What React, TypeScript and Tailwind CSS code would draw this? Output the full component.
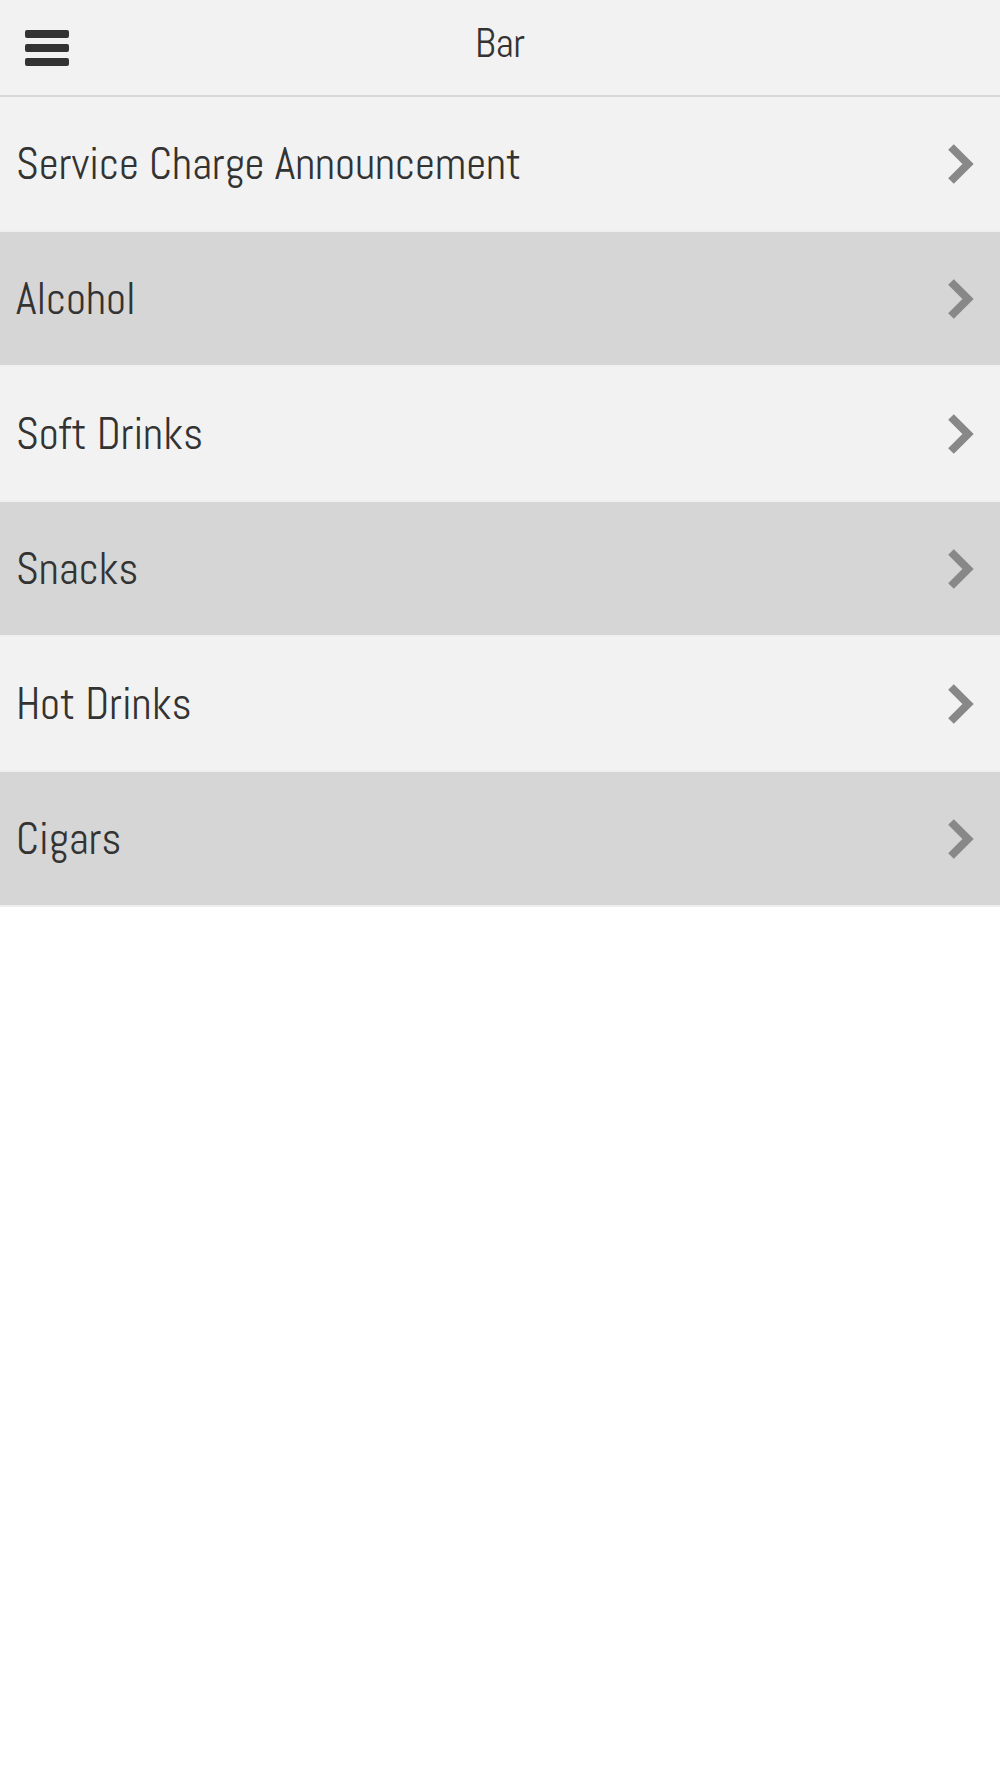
import React from "react";

const items = [
  "Service Charge Announcement",
  "Alcohol",
  "Soft Drinks",
  "Snacks",
  "Hot Drinks",
  "Cigars",
];

function Chevron() {
  return (
    <svg width="28" height="42" viewBox="0 0 28 42" className="shrink-0">
      <path d="M5 4 L22 21 L5 38" fill="none" stroke="#888888" strokeWidth="8" strokeLinejoin="miter" />
    </svg>
  );
}

export default function App() {
  return (
    <div className="min-h-[1778px] bg-white" style={{ fontFamily: 'Abel, "Roboto Condensed", "Liberation Sans", sans-serif' }}>
      <header className="h-[97px] bg-[#f2f2f2] border-b-2 border-[#d9d9d9] flex items-center relative">
        <div className="pl-[25px] flex flex-col gap-[6px]">
          <span className="block w-[44px] h-[8px] rounded-[2px] bg-[#333333]" />
          <span className="block w-[44px] h-[8px] rounded-[2px] bg-[#333333]" />
          <span className="block w-[44px] h-[8px] rounded-[2px] bg-[#333333]" />
        </div>
        <div className="absolute inset-x-0 top-0 h-[95px] pb-[8px] flex items-center justify-center text-[40px] text-[#333333] pointer-events-none">
          Bar
        </div>
      </header>
      <ul>
        {items.map((it, i) => (
          <li
            key={it}
            className={`h-[135px] border-b-2 border-[#efefef] flex items-center justify-between pl-[16px] pr-[26px] ${
              i % 2 === 0 ? "bg-[#f2f2f2]" : "bg-[#d6d6d6]"
            }`}
          >
            <span className="text-[44px] text-[#333333]">{it}</span>
            <Chevron />
          </li>
        ))}
      </ul>
    </div>
  );
}
